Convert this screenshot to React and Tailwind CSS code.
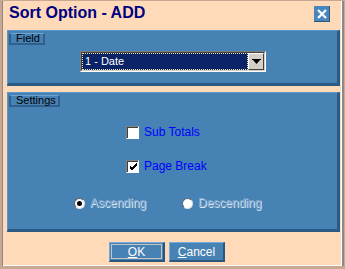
import React from 'react';

const font = { fontFamily: '"Liberation Sans", Arial, sans-serif' };

function Tab({ children, width }) {
  return (
    <div
      className={`${width} h-[12px] border-t border-l-2 border-r-2 border-b-2 border-t-[#6fa3d0] border-l-[#2f5f8a] border-r-[#2f5f8a] border-b-[#2f5f8a] bg-[#4682b4] pl-[5px] text-[11px] leading-[9px] text-black`}
    >
      {children}
    </div>
  );
}

function Panel({ className, children }) {
  return (
    <div
      className={`ml-[4px] mr-[1px] border-t border-l border-t-[#5d97c9] border-l-[#5d97c9] border-r-[3px] border-b-[3px] border-r-[#2c5a83] border-b-[#2c5a83] bg-[#4682b4] ${className}`}
    >
      {children}
    </div>
  );
}

function CheckBox({ checked, label }) {
  return (
    <div className="flex items-center gap-[5px]">
      <div className="h-[13px] w-[13px] border-t border-l border-t-[#808080] border-l-[#808080] border-b border-r border-b-white border-r-white">
        <div className="flex h-full w-full items-center justify-center border-t border-l border-t-[#404040] border-l-[#404040] bg-white">
          {checked && (
            <svg width="9" height="9" viewBox="0 0 9 9">
              <path d="M1 4 L3 6 L8 1 M1 5 L3 7 L8 2 M1 6 L3 8 L8 3" stroke="#000" strokeWidth="1" fill="none" />
            </svg>
          )}
        </div>
      </div>
      <span className="text-[12px] leading-[14px] text-[#0000ff]">{label}</span>
    </div>
  );
}

function Radio({ checked, label }) {
  return (
    <div className="flex items-center gap-[5px]">
      <div className="flex h-[11px] w-[11px] items-center justify-center rounded-full border border-t-[#606060] border-l-[#606060] border-b-[#e0e0e0] border-r-[#e0e0e0] bg-white">
        {checked && <div className="h-[5px] w-[5px] rounded-full bg-black" />}
      </div>
      <span className="text-[12px] leading-[14px] text-[#7fa6cc] [text-shadow:1px_1px_0_#d7e4f0]">{label}</span>
    </div>
  );
}

function Button({ children, focused }) {
  return (
    <button
      type="button"
      className="h-[20px] w-[56px] border-t border-l border-t-[#74abdc] border-l-[#74abdc] border-r-2 border-b-2 border-r-[#2a5780] border-b-[#2a5780] bg-[#4682b4] p-[1px] text-[12px] leading-[14px] text-white"
    >
      <div className={`flex h-full w-full items-center justify-center border ${focused ? 'border-[#c4c4c4]' : 'border-transparent'}`}>
        {children}
      </div>
    </button>
  );
}

export default function App() {
  return (
    <div className="h-[269px] w-[345px] bg-[#c8a890] pt-[1px] pl-[2px] pr-[1px] pb-[3px]" style={font}>
      <div className="h-full border-l border-l-[#8a8a8a] border-r-2 border-r-[#8a8a8a]">
        <div className="flex h-full flex-col border-r border-b border-white bg-[#ffdab9]">
          <div className="flex h-[29px] shrink-0 items-start justify-between">
            <div className="pt-[3px] pl-[6px] text-[16px] font-bold leading-[18px] text-[#000080]">Sort Option - ADD</div>
            <div className="mt-[5px] mr-[11px] flex h-[16px] w-[16px] items-center justify-center border-r border-b border-r-[#2a5780] border-b-[#2a5780] bg-[#4a86bc]">
              <svg width="10" height="10" viewBox="0 0 10 10">
                <path d="M1 1 L9 9 M9 1 L1 9" stroke="#fff" strokeWidth="2.2" />
              </svg>
            </div>
          </div>

          <Panel className="h-[56px] shrink-0 pt-[2px] pl-[1px]">
            <Tab width="w-[36px]">Field</Tab>
            <div className="mt-[6px] flex pl-[71px]">
              <div className="flex h-[21px] w-[186px] border-t border-l border-t-[#808080] border-l-[#808080] border-b border-r border-b-white border-r-white">
                <div className="flex h-full w-full border-t border-l border-t-[#404040] border-l-[#404040] border-b border-r border-b-[#d4d0c8] border-r-[#d4d0c8] bg-[#d4d0c8]">
                  <div className="flex flex-1 items-center border border-dotted border-[#f5e7a8] bg-[#0a2266] pl-[2px] text-[11px] leading-[13px] text-white">
                    1 - Date
                  </div>
                  <div className="flex w-[16px] items-center justify-center border-t border-l border-t-white border-l-white border-b border-r border-b-[#404040] border-r-[#404040] bg-[#d4d0c8]">
                    <svg width="9" height="6" viewBox="0 0 9 6">
                      <path d="M0 0 H9 V1 H0 Z M1 1 H8 L4.5 5 Z" fill="#000" />
                    </svg>
                  </div>
                </div>
              </div>
            </div>
          </Panel>

          <Panel className="mt-[6px] h-[140px] shrink-0 pt-[2px] pl-[1px]">
            <Tab width="w-[51px]">Settings</Tab>
            <div className="mt-[18px] flex flex-col gap-[20px] pl-[117px]">
              <CheckBox label="Sub Totals" />
              <CheckBox checked label="Page Break" />
            </div>
            <div className="mt-[23px] flex pl-[65px]">
              <div className="w-[108px]">
                <Radio checked label="Ascending" />
              </div>
              <Radio label="Descending" />
            </div>
          </Panel>

          <div className="mt-[10px] flex gap-[4px] pl-[106px]">
            <Button focused>
              <span><span className="underline">O</span>K</span>
            </Button>
            <Button>
              <span><span className="underline">C</span>ancel</span>
            </Button>
          </div>
        </div>
      </div>
    </div>
  );
}
